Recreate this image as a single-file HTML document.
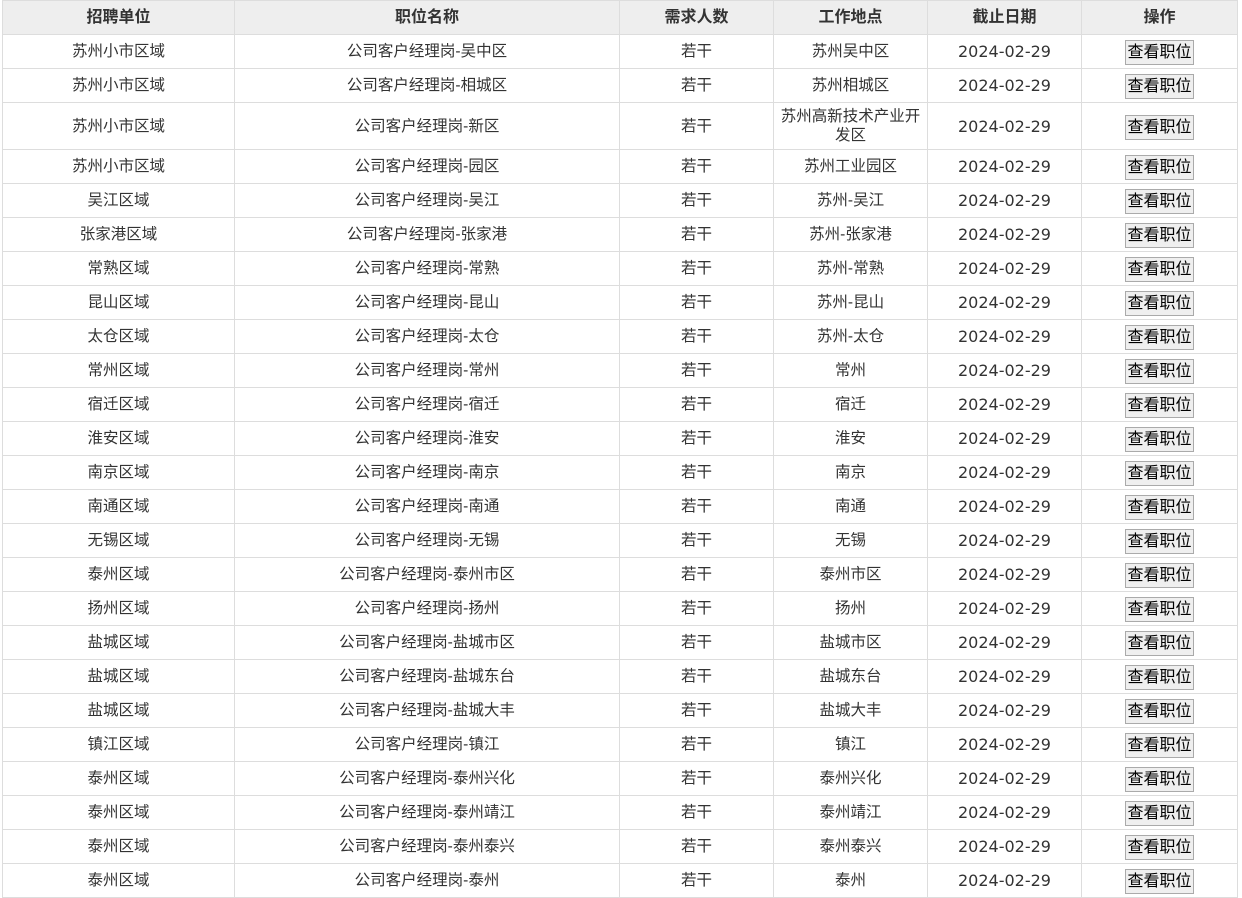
<!DOCTYPE html>
<html><head><meta charset="utf-8"><style>
body{margin:0;background:#fff;width:1242px;height:867px;overflow:hidden}
table{position:absolute;left:2px;top:0px;border-collapse:collapse;table-layout:fixed;width:1235px;font-family:"Liberation Sans","Noto Sans CJK SC",sans-serif;font-size:15.5px;color:#333}
td,th{border:1px solid #ddd;text-align:center;padding:0;height:33px;line-height:19px}
th{background:#eee;font-weight:bold;font-size:16px;height:33px}
tr.t td{height:46px}
td.d{font-family:"DejaVu Sans",sans-serif;font-size:16px}
button{font-family:"Liberation Sans","Noto Sans CJK SC",sans-serif;font-size:16px;color:#000;background:#efefef;border:1px solid #aaa;padding:0 1px;height:25px;line-height:21px;margin:2px 0 0 0}
</style></head><body>
<table>
<colgroup><col style="width:232px"><col style="width:385px"><col style="width:154px"><col style="width:154px"><col style="width:154px"><col style="width:156px"></colgroup>
<tr><th>招聘单位</th><th>职位名称</th><th>需求人数</th><th>工作地点</th><th>截止日期</th><th>操作</th></tr>
<tr><td>苏州小市区域</td><td>公司客户经理岗-吴中区</td><td>若干</td><td>苏州吴中区</td><td class="d">2024-02-29</td><td><button>查看职位</button></td></tr>
<tr><td>苏州小市区域</td><td>公司客户经理岗-相城区</td><td>若干</td><td>苏州相城区</td><td class="d">2024-02-29</td><td><button>查看职位</button></td></tr>
<tr class="t"><td>苏州小市区域</td><td>公司客户经理岗-新区</td><td>若干</td><td>苏州高新技术产业开<br>发区</td><td class="d">2024-02-29</td><td><button>查看职位</button></td></tr>
<tr><td>苏州小市区域</td><td>公司客户经理岗-园区</td><td>若干</td><td>苏州工业园区</td><td class="d">2024-02-29</td><td><button>查看职位</button></td></tr>
<tr><td>吴江区域</td><td>公司客户经理岗-吴江</td><td>若干</td><td>苏州-吴江</td><td class="d">2024-02-29</td><td><button>查看职位</button></td></tr>
<tr><td>张家港区域</td><td>公司客户经理岗-张家港</td><td>若干</td><td>苏州-张家港</td><td class="d">2024-02-29</td><td><button>查看职位</button></td></tr>
<tr><td>常熟区域</td><td>公司客户经理岗-常熟</td><td>若干</td><td>苏州-常熟</td><td class="d">2024-02-29</td><td><button>查看职位</button></td></tr>
<tr><td>昆山区域</td><td>公司客户经理岗-昆山</td><td>若干</td><td>苏州-昆山</td><td class="d">2024-02-29</td><td><button>查看职位</button></td></tr>
<tr><td>太仓区域</td><td>公司客户经理岗-太仓</td><td>若干</td><td>苏州-太仓</td><td class="d">2024-02-29</td><td><button>查看职位</button></td></tr>
<tr><td>常州区域</td><td>公司客户经理岗-常州</td><td>若干</td><td>常州</td><td class="d">2024-02-29</td><td><button>查看职位</button></td></tr>
<tr><td>宿迁区域</td><td>公司客户经理岗-宿迁</td><td>若干</td><td>宿迁</td><td class="d">2024-02-29</td><td><button>查看职位</button></td></tr>
<tr><td>淮安区域</td><td>公司客户经理岗-淮安</td><td>若干</td><td>淮安</td><td class="d">2024-02-29</td><td><button>查看职位</button></td></tr>
<tr><td>南京区域</td><td>公司客户经理岗-南京</td><td>若干</td><td>南京</td><td class="d">2024-02-29</td><td><button>查看职位</button></td></tr>
<tr><td>南通区域</td><td>公司客户经理岗-南通</td><td>若干</td><td>南通</td><td class="d">2024-02-29</td><td><button>查看职位</button></td></tr>
<tr><td>无锡区域</td><td>公司客户经理岗-无锡</td><td>若干</td><td>无锡</td><td class="d">2024-02-29</td><td><button>查看职位</button></td></tr>
<tr><td>泰州区域</td><td>公司客户经理岗-泰州市区</td><td>若干</td><td>泰州市区</td><td class="d">2024-02-29</td><td><button>查看职位</button></td></tr>
<tr><td>扬州区域</td><td>公司客户经理岗-扬州</td><td>若干</td><td>扬州</td><td class="d">2024-02-29</td><td><button>查看职位</button></td></tr>
<tr><td>盐城区域</td><td>公司客户经理岗-盐城市区</td><td>若干</td><td>盐城市区</td><td class="d">2024-02-29</td><td><button>查看职位</button></td></tr>
<tr><td>盐城区域</td><td>公司客户经理岗-盐城东台</td><td>若干</td><td>盐城东台</td><td class="d">2024-02-29</td><td><button>查看职位</button></td></tr>
<tr><td>盐城区域</td><td>公司客户经理岗-盐城大丰</td><td>若干</td><td>盐城大丰</td><td class="d">2024-02-29</td><td><button>查看职位</button></td></tr>
<tr><td>镇江区域</td><td>公司客户经理岗-镇江</td><td>若干</td><td>镇江</td><td class="d">2024-02-29</td><td><button>查看职位</button></td></tr>
<tr><td>泰州区域</td><td>公司客户经理岗-泰州兴化</td><td>若干</td><td>泰州兴化</td><td class="d">2024-02-29</td><td><button>查看职位</button></td></tr>
<tr><td>泰州区域</td><td>公司客户经理岗-泰州靖江</td><td>若干</td><td>泰州靖江</td><td class="d">2024-02-29</td><td><button>查看职位</button></td></tr>
<tr><td>泰州区域</td><td>公司客户经理岗-泰州泰兴</td><td>若干</td><td>泰州泰兴</td><td class="d">2024-02-29</td><td><button>查看职位</button></td></tr>
<tr><td>泰州区域</td><td>公司客户经理岗-泰州</td><td>若干</td><td>泰州</td><td class="d">2024-02-29</td><td><button>查看职位</button></td></tr>
</table>
</body></html>
